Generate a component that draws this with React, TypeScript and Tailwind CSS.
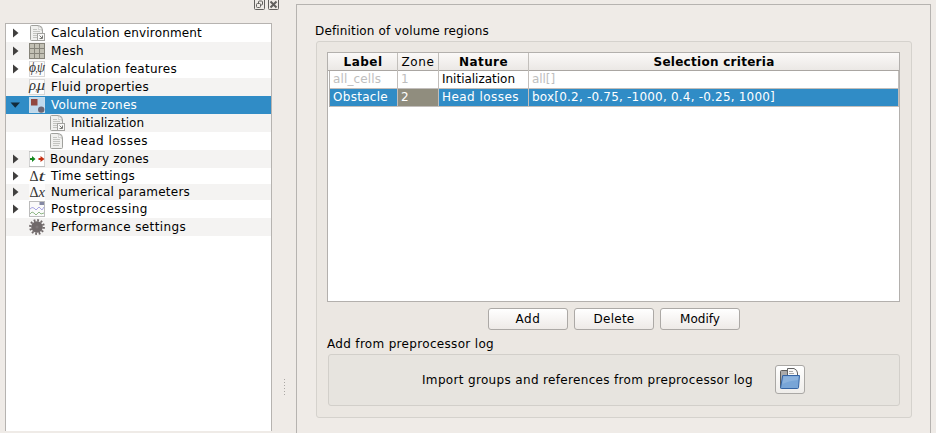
import React from 'react';

function Label({ text, w, className = '' }: { text: string; w: number; className?: string }) {
  const ref = React.useRef<HTMLSpanElement>(null);
  const [spacing, setSpacing] = React.useState(0);
  React.useLayoutEffect(() => {
    if (ref.current) {
      const natural = ref.current.getBoundingClientRect().width;
      setSpacing((w - natural) / text.length);
    }
  }, [text, w]);
  return (
    <span ref={ref} className={`inline-block shrink-0 whitespace-pre ${className}`} style={{ letterSpacing: `${spacing}px` }}>
      {text}
    </span>
  );
}

function DocIcon({ arrow = false }: { arrow?: boolean }) {
  return (
    <svg width="16" height="16" viewBox="0 0 16 16">
      <path d="M1.5 1.5Q1.5.5 2.5.5H9.500Q13.5 1 13.500 5V14.5Q13.5 15.5 12.5 15.5H2.5Q1.5 15.5 1.5 14.5Z" fill="#f0f0ee" stroke="#a0a19d" />
      <path d="M9 1Q10.500 2.500 9.500 4.500Q11.500 4 13 5.500Q12.500 2 9 1Z" fill="#fff" stroke="#b5b5b2" strokeWidth=".6" />
      <path d="M4 4.500H8M4 6.500H11M4 8.500H11M4 10.500H11M4 12.500H10" stroke="#c3c4c0" />
      {arrow && (
        <g>
          <rect x="8.500" y="8.500" width="7" height="7" fill="#f8f8f7" stroke="#a3a3a0" />
          <path d="M10.500 10.500L13 13M13.500 10.500V13.500H10.500" stroke="#777773" fill="none" />
        </g>
      )}
    </svg>
  );
}

function MeshIcon() {
  return (
    <svg width="16" height="16" viewBox="0 0 16 16">
      <rect width="16" height="16" fill="#c2c0b4" />
      <path d="M0 .5H16M0 5.500H16M0 10.500H16M0 15.500H16M.5 0V16M5.500 0V16M10.500 0V16M15.500 0V16" stroke="#86847a" />
    </svg>
  );
}

function GreekIcon({ first, second }: { first: string; second: string }) {
  return (
    <svg className="overflow-visible" width="16" height="16" viewBox="0 0 16 16" fontStyle="italic" fill="#333" fontFamily="Liberation Serif, DejaVu Serif, serif">
      <rect x=".5" y=".5" width="15" height="15" fill="#fcfcfc" stroke="#d8d8d8" />
      <text x="0" y="11" textLength="7" lengthAdjust="spacingAndGlyphs" fontSize="14">{first}</text>
      <text x="6.3" y="11" fontSize="10">,</text>
      <text x="8" y="11" textLength="8" lengthAdjust="spacingAndGlyphs" fontSize="14">{second}</text>
    </svg>
  );
}

function DeltaIcon({ symbol }: { symbol: string }) {
  return (
    <svg className="overflow-visible" width="16" height="16" viewBox="0 0 16 16" fill="#333" fontFamily="Liberation Serif, serif">
      <rect width="16" height="16" fill="#fff" fillOpacity=".6" />
      <text x="0.5" y="13" textLength="9" lengthAdjust="spacingAndGlyphs" fontSize="15">Δ</text>
      <text x="9.5" y="13" textLength="6.500" lengthAdjust="spacingAndGlyphs" fontSize="15" fontStyle="italic">{symbol}</text>
    </svg>
  );
}

function VolumeIcon() {
  return (
    <svg width="16" height="16" viewBox="0 0 16 16">
      <rect x=".5" y=".5" width="15" height="15" fill="#bfd9ec" stroke="#c9dcea" />
      <rect x="2" y="2" width="6.500" height="6.500" fill="#91473f" />
      <circle cx="12.200" cy="12.600" r="3.200" fill="#6c6572" />
    </svg>
  );
}

function BoundaryIcon() {
  return (
    <svg width="16" height="16" viewBox="0 0 16 16">
      <rect x=".5" y=".5" width="15" height="15" fill="#fff" stroke="#d3d3d3" />
      <path d="M.5 15.500H16M.5 .5H16" stroke="#a9a9a9" strokeDasharray="1 1" />
      <path d="M1 7H3V5L6.500 8L3 11V9H1Z" fill="#16891f" />
      <path d="M9.500 7H11.500V5L15.500 8L11.500 11V9H9.500Z" fill="#c62e10" />
    </svg>
  );
}

function PlotIcon() {
  return (
    <svg width="16" height="16" viewBox="0 0 16 16" fill="none">
      <rect x=".5" y=".5" width="15" height="15" fill="#fafafa" stroke="#bcbcbc" />
      <rect x="10.500" y="1" width="4.500" height="3" fill="#8488a4" />
      <path d="M1 8L3 6.500L5 7L7 9L10 6L12 8L13 9L15 6" stroke="#a9a6e5" />
      <path d="M1 13L3 11L5 12L7 14L10 11L12 13L15 12" stroke="#91b887" />
    </svg>
  );
}

function GearIcon() {
  return (
    <svg width="16" height="16" viewBox="0 0 16 16">
      <circle cx="8" cy="8" r="5.800" fill="#70696a" />
      <circle cx="8" cy="8" r="6.700" fill="none" stroke="#70696a" strokeWidth="2.400" strokeDasharray="1.754 1.754" />
      <circle cx="8" cy="8" r="1.500" fill="#7d7677" />
    </svg>
  );
}

function FolderIcon() {
  return (
    <svg width="22" height="22" viewBox="0 0 22 22">
      <path d="M1.500 20V3.500Q1.500 2.500 2.500 2.500H8L9 5.500H18V19Z" fill="#aaa" stroke="#5d5d5d" />
      <path d="M8.500 10V.5H15Q18.500 2 18.500 5V10Z" fill="#f9f9f8" stroke="#626262" />
      <path d="M10 3.500H14M10 5.500H15" stroke="#aaa" />
      <path d="M3.700 7.500H20.500L19.500 19.500Q19.400 20.500 18.500 20.500H2.500Q1.500 20.500 1.600 19.500Z" fill="#78a5d7" stroke="#3464a4" />
      <path d="M4.500 8.500H19.300L19 12Q9 13 3.500 16Z" fill="#8bb2dd" />
    </svg>
  );
}

const tree = [
  { t: 'Calculation environment', w: 151, icon: <DocIcon arrow />, arrow: true, cls: 'h-[18px]' },
  { t: 'Mesh', w: 33, icon: <MeshIcon />, arrow: true, cls: 'h-[18px] bg-[#f4f3f2]' },
  { t: 'Calculation features', w: 126, icon: <GreekIcon first="ϕ" second="ψ" />, arrow: true, cls: 'h-[18px]' },
  { t: 'Fluid properties', w: 98, icon: <GreekIcon first="ρ" second="μ" />, cls: 'h-[18px] bg-[#f4f3f2]' },
  { t: 'Volume zones', w: 86, icon: <VolumeIcon />, open: true, cls: 'h-[18px] bg-[#308cc6] text-white' },
  { t: 'Initialization', w: 73, icon: <DocIcon arrow />, child: true, cls: 'h-[18px] bg-[#f4f3f2]' },
  { t: 'Head losses', w: 77, icon: <DocIcon />, child: true, cls: 'h-[18px]' },
  { t: 'Boundary zones', w: 99, icon: <BoundaryIcon />, arrow: true, tight: true, cls: 'h-[18px] bg-[#f4f3f2]' },
  { t: 'Time settings', w: 84, icon: <DeltaIcon symbol="t" />, arrow: true, cls: 'h-[16px]' },
  { t: 'Numerical parameters', w: 139, icon: <DeltaIcon symbol="x" />, arrow: true, cls: 'h-[16px] bg-[#f4f3f2]' },
  { t: 'Postprocessing', w: 97, icon: <PlotIcon />, arrow: true, cls: 'h-[18px]' },
  { t: 'Performance settings', w: 135, icon: <GearIcon />, cls: 'h-[18px] bg-[#f4f3f2]' },
];

function Sidebar() {
  return (
    <aside className="flex h-[433px] w-[296px] shrink-0">
      <div className="flex w-[272px] flex-col pl-[5px]">
        <div className="h-[23px]" />
        <div className="h-[408px] border-x border-t border-[#b6b3b0] bg-white">
          {tree.map((r) => (
            <div key={r.t} className={`flex items-center ${r.cls}`}>
              <div className={`flex shrink-0 items-center ${r.child ? 'w-[43px]' : 'w-[23px]'}`}>
                {r.arrow && <svg className="ml-[6px]" width="8" height="10"><path d="M1 .5V9.500L6.500 5Z" fill="#403f3e" /></svg>}
                {r.open && <svg className="ml-[4px]" width="11" height="7"><path d="M.5.5H10L5.250 5.800Z" fill="#122b3b" /></svg>}
              </div>
              <div className={`shrink-0 ${r.tight ? 'w-[21px]' : 'w-[22px]'}`}>{r.icon}</div>
              <Label text={r.t} w={r.w} />
            </div>
          ))}
        </div>
      </div>
      <div className="flex w-6 flex-col">
        <div className="-ml-[18px] flex gap-[3px]">
          <svg width="11" height="10" viewBox="0 0 11 10" fill="none" stroke="#62605e">
            <path d="M.5 0V8.500Q.5 9.500 1.500 9.500H9.500Q10.500 9.500 10.500 8.500V0" />
            <rect x="4.500" y="1" width="4" height="4" rx="1" /><rect x="2.500" y="3.500" width="4" height="4" rx="1" fill="#efebe7" />
          </svg>
          <svg width="11" height="10" viewBox="0 0 11 10" fill="none" stroke="#62605e">
            <path d="M.5 0V8.500Q.5 9.500 1.500 9.500H9.500Q10.500 9.500 10.500 8.500V0" />
            <path d="M2.500 1.500L8.500 7.500M8.500 1.500L2.500 7.500" strokeWidth="2" />
          </svg>
        </div>
        <svg className="ml-3 mt-[368px]" width="2" height="18"><path d="M.5 1V18" stroke="#aaa7a4" strokeDasharray="1 2" /></svg>
      </div>
    </aside>
  );
}

function RegionsTable() {
  return (
    <div className="h-[250px] w-[573px] border border-[#b3b0ad] bg-white">
      <div className="grid h-[18px] grid-cols-[70px_41px_90px_370px] border-b border-[#aaa6a2] bg-linear-to-b from-[#fbf9f8] to-[#ebe8e5] text-center font-bold leading-[18px]">
        <div className="border-r border-[#c2bfbb] pl-px"><Label text="Label" w={39} /></div>
        <div className="border-r border-[#c2bfbb] font-normal"><Label text="Zone" w={33} /></div>
        <div className="border-r border-[#c2bfbb]"><Label text="Nature" w={49} /></div>
        <div><Label text="Selection criteria" w={121} /></div>
      </div>
      <div className="ml-px border-l border-[#b3b0ad]">
        <div className="grid h-[18px] grid-cols-[67px_41px_90px_370px] border-b border-[#c2bebb] leading-[16px] text-[#bebebe] pl-px">
          <div className="border-r border-[#c2bebb] pl-[2px]"><Label text="all_cells" w={48} /></div>
          <div className="border-r border-[#c2bebb] pl-[3px]"><Label text="1" w={8} /></div>
          <div className="border-r border-[#c2bebb] pl-[3px] text-black"><Label text="Initialization" w={73} /></div>
          <div className="border-r border-[#c2bebb] pl-[3px]"><Label text="all[]" w={23} /></div>
        </div>
        <div className="grid h-[18px] grid-cols-[68px_41px_90px_370px] border-b border-[#c2bebb] bg-[#308cc6] leading-[16px] text-white">
          <div className="border-r border-[#c2bebb] pl-[3px]"><Label text="Obstacle" w={55} /></div>
          <div className="border-r border-[#c2bebb] bg-[#908d7e] pl-[3px]"><Label text="2" w={8} /></div>
          <div className="border-r border-[#c2bebb] pl-[3px]"><Label text="Head losses" w={77} /></div>
          <div className="border-r border-[#c2bebb] pl-[3px]"><Label text="box[0.2, -0.75, -1000, 0.4, -0.25, 1000]" w={243} /></div>
        </div>
      </div>
    </div>
  );
}

const buttons = [{ t: 'Add', w: 25 }, { t: 'Delete', w: 41 }, { t: 'Modify', w: 40 }];

export default function App() {
  return (
    <div className="flex h-[433px] w-[936px] overflow-hidden bg-[#efebe7] text-[12px] leading-4 text-black [font-family:'DejaVu_Sans',sans-serif]">
      <Sidebar />
      <main className="flex w-[640px] flex-col pt-1">
        <section className="h-[429px] w-[635px] border-x border-t border-[#b6b3b0] pl-[18px] pt-[18px]">
          <Label text="Definition of volume regions" w={174} className="block" />
          <div className="ml-px mt-[2px] h-[377px] w-[596px] rounded-[3px] border border-[#d5d2cd] bg-[#ebe7e2] pl-[10px] pt-[10px]">
            <RegionsTable />
            <div className="mt-[6px] flex gap-[6px] pl-[161px]">
              {buttons.map((b) => (
                <button key={b.t} className="h-[22px] w-[80px] rounded-[3px] border border-[#aca9a6] bg-linear-to-b from-white to-[#eeeae7] text-center leading-5">
                  <Label text={b.t} w={b.w} />
                </button>
              ))}
            </div>
            <div className="mt-[6px] h-4"><Label text="Add from preprocessor log" w={167} /></div>
            <div className="ml-px mt-[2px] flex h-[52px] w-[572px] items-center rounded-[3px] border border-[#d2cfca] bg-[#e7e4df] pb-px pl-[93px]">
              <Label text="Import groups and references from preprocessor log" w={331} />
              <button className="ml-[22px] flex h-[29px] w-[30px] items-center justify-center rounded-[3px] border border-[#aaa8a5] bg-linear-to-b from-white to-[#efedea] pb-[2px]"><FolderIcon /></button>
            </div>
          </div>
        </section>
      </main>
    </div>
  );
}
